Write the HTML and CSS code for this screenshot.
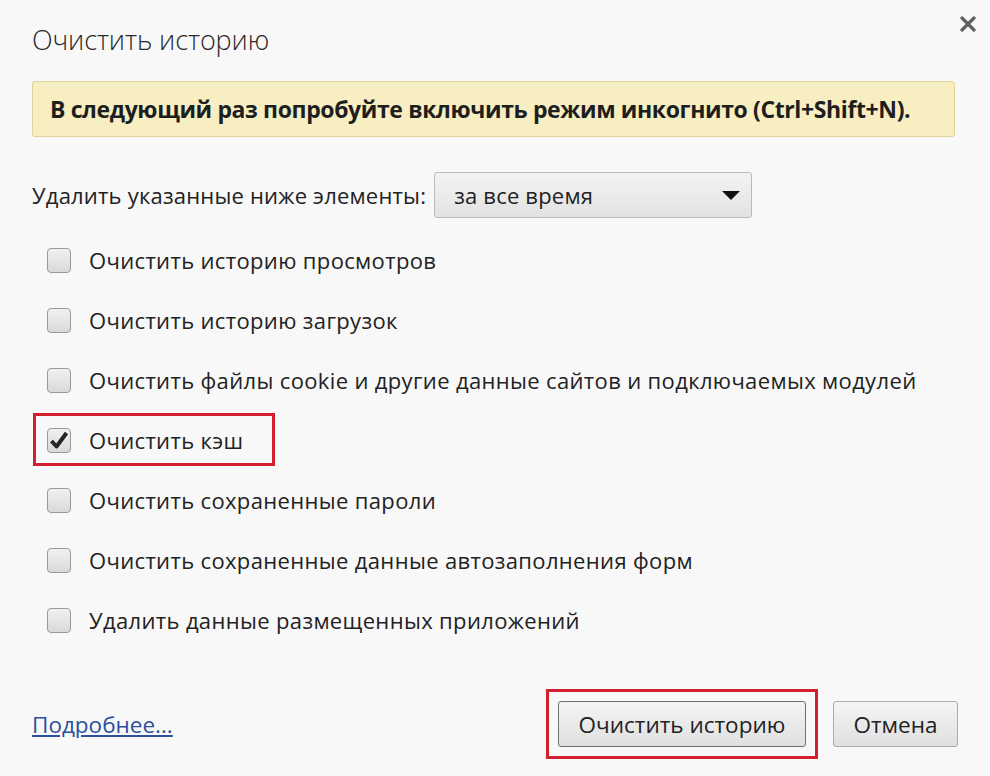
FILE: index.html
```html
<!DOCTYPE html>
<html lang="ru">
  <head>
    <meta charset="UTF-8">
    <title>Очистить историю</title>
    <link rel="stylesheet" href="styles.css">
  </head>
  <body>
    <main class="dialog">
      <div class="header">
        <h1 class="title">Очистить историю</h1>
        <button class="close" aria-label="Закрыть">
          <svg width="16" height="16" viewBox="0 0 16 16">
            <path d="M2 2 L14 14 M14 2 L2 14" stroke="#616161" stroke-width="3.2" stroke-linecap="round"/>
          </svg>
        </button>
      </div>

      <div class="notice">В следующий раз попробуйте включить режим инкогнито (Ctrl+Shift+N).</div>

      <div class="period">
        <span>Удалить указанные ниже элементы:</span>
        <div class="select">
          <span>за все время</span>
          <span class="arrow"></span>
        </div>
      </div>

      <div class="options">
        <label class="option"><span class="box"></span>Очистить историю просмотров</label>
        <label class="option"><span class="box"></span>Очистить историю загрузок</label>
        <label class="option"><span class="box"></span>Очистить файлы cookie и другие данные сайтов и подключаемых модулей</label>
        <label class="option marked">
          <span class="box">
            <svg width="20" height="20" viewBox="0 0 20 20">
              <path d="M2.5 11 L7.5 16.5 L17.5 3" fill="none" stroke="#262626" stroke-width="4" stroke-linejoin="round"/>
            </svg>
          </span>Очистить кэш
        </label>
        <label class="option"><span class="box"></span>Очистить сохраненные пароли</label>
        <label class="option"><span class="box"></span>Очистить сохраненные данные автозаполнения форм</label>
        <label class="option"><span class="box"></span>Удалить данные размещенных приложений</label>
      </div>

      <div class="footer">
        <a class="more" href="#">Подробнее...</a>
        <div class="buttons">
          <span class="mark"><button class="btn btn-main">Очистить историю</button></span>
          <button class="btn btn-cancel">Отмена</button>
        </div>
      </div>
    </main>
  </body>
</html>
```

FILE: styles.css
```css
* {
  margin: 0;
  padding: 0;
  box-sizing: border-box;
}

body {
  min-height: 100vh;
  background-color: #f8f8f8;
  font-family: "Open Sans", "DejaVu Sans", sans-serif;
  font-size: 22px;
  letter-spacing: 0.2px;
  color: #222;
}

.dialog {
  padding: 23px 35px 29px 32px;
  display: flex;
  flex-direction: column;
}

.header {
  display: flex;
  justify-content: space-between;
  align-items: flex-start;
  margin-bottom: 24px;
}

.title {
  font-size: 27px;
  font-weight: 300;
  line-height: 34px;
  letter-spacing: -0.1px;
  color: #2a2a2a;
}

.close {
  background: none;
  border: none;
  margin: -7px -21px 0 0;
  width: 16px;
  height: 16px;
  cursor: pointer;
}

.notice {
  height: 56px;
  display: flex;
  align-items: center;
  padding: 0 17px;
  background-color: #f7eec2;
  border: 1px solid #e0d39c;
  border-radius: 3px;
  font-weight: 700;
  font-size: 23px;
  letter-spacing: -0.38px;
  color: #1e1e1e;
}

.period {
  display: flex;
  align-items: center;
  gap: 8px;
  margin-top: 35px;
}

.select {
  width: 318px;
  height: 46px;
  display: flex;
  align-items: center;
  justify-content: space-between;
  padding: 0 11px 0 19px;
  background: linear-gradient(#f3f3f3, #e2e2e2);
  border: 1px solid #b9b9b9;
  border-radius: 3px;
}

.arrow {
  width: 0;
  height: 0;
  border-left: 9px solid transparent;
  border-right: 9px solid transparent;
  border-top: 9px solid #111;
}

.options {
  margin-top: 12px;
  display: flex;
  flex-direction: column;
  letter-spacing: 0.35px;
}

.option {
  height: 60px;
  display: flex;
  align-items: center;
  gap: 18px;
  padding-left: 15px;
  width: fit-content;
  position: relative;
}

.box {
  width: 24px;
  height: 25px;
  border: 1px solid #9a9a9a;
  border-radius: 4px;
  background: linear-gradient(#f0f0f0, #d9d9d9);
  display: flex;
  align-items: center;
  justify-content: center;
}

.marked::after {
  content: "";
  position: absolute;
  top: 3px;
  bottom: 4px;
  left: 1px;
  right: -32px;
  border: 3px solid #d11f2b;
}

.footer {
  margin-top: 51px;
  margin-right: -3px;
  display: flex;
  justify-content: space-between;
  align-items: center;
}

.more {
  color: #2c4f9e;
  font-size: 22.5px;
  letter-spacing: 0;
}

.buttons {
  display: flex;
  align-items: center;
  gap: 27px;
}

.mark {
  display: flex;
  outline: 3px solid #d11f2b;
  outline-offset: 9px;
}

.btn {
  height: 46px;
  font-family: "Open Sans", "DejaVu Sans", sans-serif;
  font-size: 22.5px;
  color: #222;
  background: linear-gradient(#f4f4f4, #e0e0e0);
  border: 1px solid #8e8e8e;
  border-radius: 3px;
  cursor: pointer;
}

.btn-main {
  width: 248px;
  border-color: #6f6f6f;
}

.btn-cancel {
  width: 125px;
  border-color: #aaa;
}
```
